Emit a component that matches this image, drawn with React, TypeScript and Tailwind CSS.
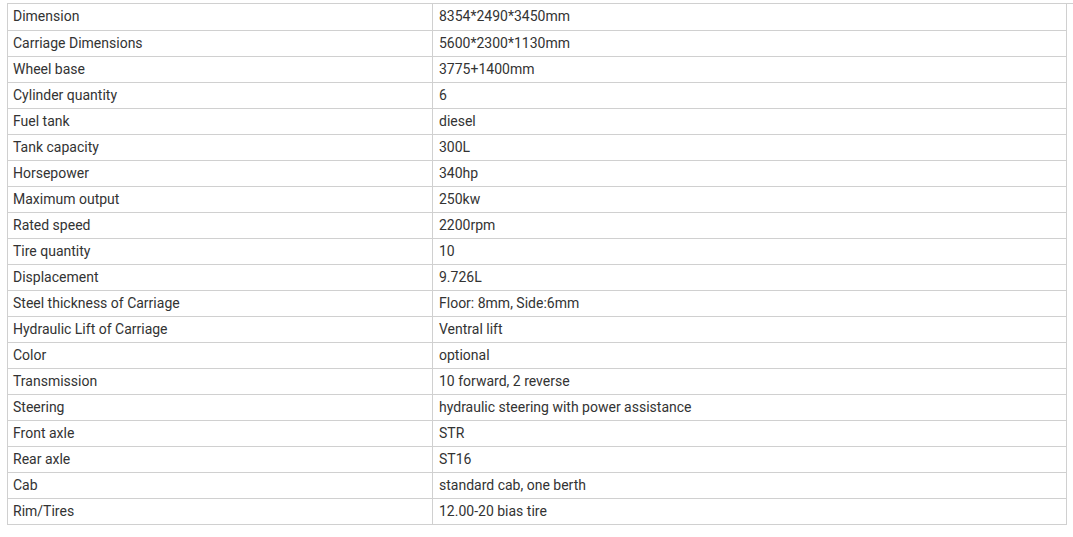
import React from "react";

const rows: [string, string][] = [
  ["Dimension", "8354*2490*3450mm"],
  ["Carriage Dimensions", "5600*2300*1130mm"],
  ["Wheel base", "3775+1400mm"],
  ["Cylinder quantity", "6"],
  ["Fuel tank", "diesel"],
  ["Tank capacity", "300L"],
  ["Horsepower", "340hp"],
  ["Maximum output", "250kw"],
  ["Rated speed", "2200rpm"],
  ["Tire quantity", "10"],
  ["Displacement", "9.726L"],
  ["Steel thickness of Carriage", "Floor: 8mm, Side:6mm"],
  ["Hydraulic Lift of Carriage", "Ventral lift"],
  ["Color", "optional"],
  ["Transmission", "10 forward, 2 reverse"],
  ["Steering", "hydraulic steering with power assistance"],
  ["Front axle", "STR"],
  ["Rear axle", "ST16"],
  ["Cab", "standard cab, one berth"],
  ["Rim/Tires", "12.00-20 bias tire"],
];

export default function App() {
  return (
    <div
      className="w-[1073px] h-[537px] bg-white pt-[3px] pl-[7px] text-[14px] text-[#333]"
      style={{ fontFamily: "Roboto, 'Liberation Sans', sans-serif" }}
    >
      <div className="border-t border-[#d0d0d0]">
        <table className="w-[1060px] border-collapse table-fixed">
          <colgroup>
            <col className="w-[425px]" />
            <col />
          </colgroup>
          <tbody>
            {rows.map(([k, v], i) => (
              <tr key={i} className="h-[26px]">
                <td className={`border border-[#d0d0d0] ${i === 0 ? "border-t-0" : ""} px-[5px] py-0 leading-[25px] align-middle`}>
                  {k}
                </td>
                <td className={`border border-[#d0d0d0] ${i === 0 ? "border-t-0" : ""} px-[6px] py-0 leading-[25px] align-middle`}>
                  {v}
                </td>
              </tr>
            ))}
          </tbody>
        </table>
      </div>
    </div>
  );
}
